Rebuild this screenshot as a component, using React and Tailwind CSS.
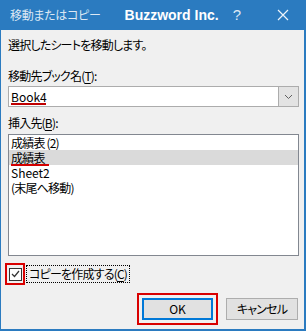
import React from 'react';

const Under = ({ children }) => <span className="underline underline-offset-2">{children}</span>;

export default function App() {
    const items = ['成績表 (2)', '成績表', 'Sheet2', '(末尾へ移動)'];
    return (
        <div className="w-[306px] h-[331px] flex flex-col bg-[#f0f0f0] border-l border-r-2 border-b-2 border-[#2b7bc0] text-[12px] tracking-[-0.8px] text-black overflow-hidden font-['Noto_Sans_CJK_JP','Noto_Sans',sans-serif] [font-feature-settings:'palt']">
            {/* title bar */}
            <div className="h-[30px] shrink-0 bg-[#2b7bc0] flex items-center pl-[9px] pr-[15px]">
                <span className="text-[12px] tracking-[-0.3px] text-[#dce8f4]">移動またはコピー</span>
                <span className="ml-[24px] text-[14px] tracking-normal font-bold text-white font-['Liberation_Sans',Arial,sans-serif]">
                    Buzzword Inc.
                </span>
                <span className="ml-[14px] text-[15px] text-[#dce8f4] font-['Liberation_Sans',sans-serif]">?</span>
                <svg className="ml-auto w-[12px] h-[12px]" viewBox="0 0 12 12" fill="none" stroke="#eef4fa" strokeWidth="1.2">
                    <path d="M1 1l10 10M11 1L1 11" />
                </svg>
            </div>

            <div className="flex-1 flex flex-col pl-[7px] pr-[5px]">
                <p className="mt-[7px] leading-[16px]">選択したシートを移動します。</p>

                <p className="mt-[15px] leading-[16px]">移動先ブック名(<Under>T</Under>):</p>
                <div className="mt-[2px] h-[21px] flex bg-white border border-[#acacac]">
                    <div className="flex-1 relative pl-[2px] leading-[19px] tracking-normal">
                        Book4
                        <div className="absolute left-[2px] top-[16px] w-[35px] h-[2px] bg-[#c00000]" />
                    </div>
                    <div className="w-[20px] bg-[#e3e3e3] border-l border-[#acacac] flex items-center justify-center">
                        <svg className="w-[9px] h-[6px]" viewBox="0 0 9 6" fill="none" stroke="#606060" strokeWidth="1">
                            <path d="M1 1l3.5 3.5L8 1" />
                        </svg>
                    </div>
                </div>

                <p className="mt-[8px] leading-[16px]">挿入先(<Under>B</Under>):</p>
                <div className="mt-[3px] h-[122px] bg-white border border-[#828790]">
                    {items.map((it, i) => (
                        <div
                            key={i}
                            className={`relative h-[15px] leading-[15px] pl-[2px] ${i === 2 ? 'tracking-normal' : ''} ${i === 1 ? 'bg-[#dadada]' : ''}`}
                        >
                            {it}
                            {i === 1 && <div className="absolute left-[2px] top-[14px] w-[38px] h-[2px] bg-[#d40000]" />}
                        </div>
                    ))}
                </div>

                {/* checkbox */}
                <div className="mt-[7px] -ml-[3px] flex items-center">
                    <div className="w-[20px] h-[22px] border-2 border-[#d90000] flex items-center justify-center">
                        <div className="w-[13px] h-[13px] bg-white border border-[#333] flex items-center justify-center">
                            <svg className="w-[9px] h-[8px]" viewBox="0 0 9 8" fill="none" stroke="#333" strokeWidth="1.2">
                                <path d="M1 4l2.5 2.5L8 1" />
                            </svg>
                        </div>
                    </div>
                    <div className="ml-[1px] border border-dotted border-black px-[2px] leading-[16px]">
                        コピーを作成する(<Under>C</Under>)
                    </div>
                </div>

                {/* buttons */}
                <div className="mt-[8px] flex justify-end items-center gap-[8px] pr-[1px]">
                    <div className="p-[3px] border-2 border-[#d90000]">
                        <div className="w-[71px] h-[22px] bg-[#e1e1e1] border-2 border-[#0078d7] flex items-center justify-center tracking-normal">
                            OK
                        </div>
                    </div>
                    <div className="w-[72px] h-[22px] bg-[#e1e1e1] border border-[#adadad] flex items-center justify-center">
                        キャンセル
                    </div>
                </div>
            </div>
        </div>
    );
}
